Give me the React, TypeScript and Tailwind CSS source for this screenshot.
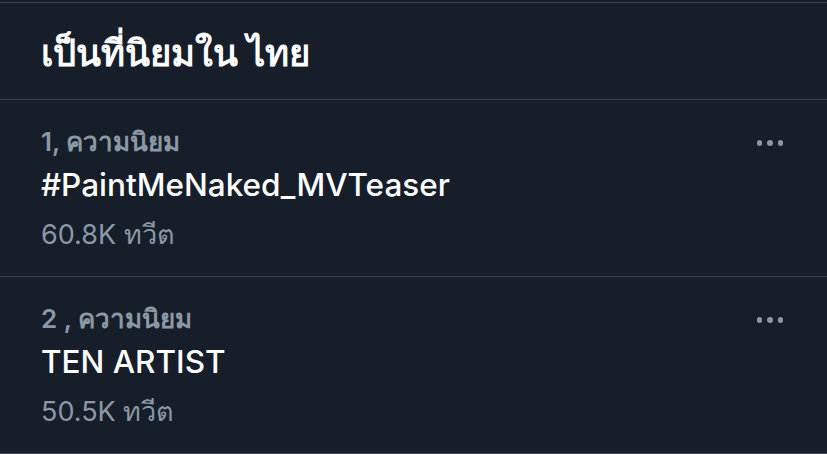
const trends = [
  { rank: '1,', label: '#PaintMeNaked_MVTeaser', count: '60.8K ทวีต' },
  { rank: '2 ,', label: 'TEN ARTIST', count: '50.5K ทวีต' },
];

function MoreDots() {
  return (
    <div className="flex items-center gap-[5px] pt-[4px]">
      <span className="block w-[5.5px] h-[5.5px] rounded-full bg-[#8b98a5]" />
      <span className="block w-[5.5px] h-[5.5px] rounded-full bg-[#8b98a5]" />
      <span className="block w-[5.5px] h-[5.5px] rounded-full bg-[#8b98a5]" />
    </div>
  );
}

export default function App() {
  return (
    <div
      className="w-[827px] h-[454px] overflow-hidden bg-[#161e2a] text-white"
      style={{ fontFamily: 'Inter, "Noto Sans", "DejaVu Sans", sans-serif' }}
    >
      <div className="h-[2px]" />
      <div className="border-t border-[#3a444f]" />
      <div className="h-[97px] flex items-center px-[41px] border-b border-[#3a444f]">
        <h2 className="text-[36.5px] font-bold leading-none pt-[4px]">เป็นที่นิยมใน ไทย</h2>
      </div>
      {trends.map((t) => (
        <div key={t.label} className="h-[177px] flex justify-between pl-[41px] pr-[44px] pt-[26px] border-b border-[#3a444f]">
          <div className="flex flex-col">
            <div className="text-[26px] font-semibold text-[#8b98a5] leading-[32px]">
              {t.rank} ความนิยม
            </div>
            <div className="text-[31.5px] font-medium leading-[44px] mt-[5px]">{t.label}</div>
            <div className="text-[27px] text-[#8b98a5] leading-[36px] mt-[10px]">{t.count}</div>
          </div>
          <div className="pt-[10px]">
            <MoreDots />
          </div>
        </div>
      ))}
    </div>
  );
}
